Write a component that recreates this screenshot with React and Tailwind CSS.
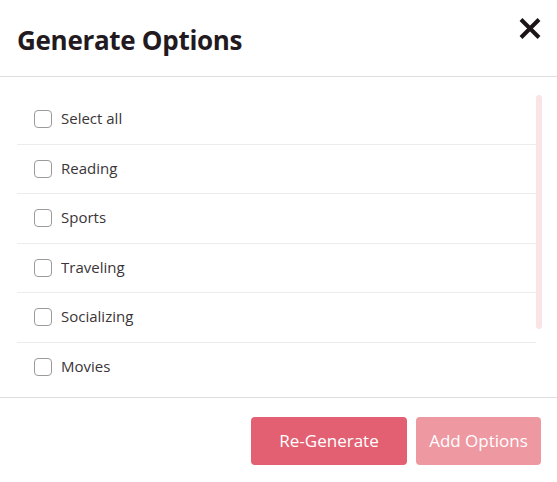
const options = [
  "Select all",
  "Reading",
  "Sports",
  "Traveling",
  "Socializing",
  "Movies",
  "Music",
];

export default function App() {
  return (
    <div
      className="w-[557px] h-[482px] bg-white flex flex-col text-[#231a1f]"
      style={{ fontFamily: '"Open Sans", "Noto Sans", sans-serif' }}
    >
      <div className="h-[77px] shrink-0 flex items-center pl-[17px] border-b border-[#dedde0] relative">
        <h2 className="text-[26px] font-bold tracking-[-0.3px] mt-[4px]">Generate Options</h2>
        <button className="absolute left-[519px] top-[18px]">
          <svg width="22" height="21" viewBox="0 0 22 21" className="block">
            <path d="M2 1.5 L20 19.5 M20 1.5 L2 19.5" stroke="#1c1417" strokeWidth="4" fill="none" />
          </svg>
        </button>
      </div>

      <div className="h-[320px] shrink-0 pt-[18px] pb-[6px] pl-[17px] pr-[15px]">
        <div className="h-full overflow-hidden relative pr-[6px]">
          {options.map((opt) => (
            <label
              key={opt}
              className="h-[49.5px] flex items-center pl-[17px] gap-[9px] text-[15px] text-[#3a3538] cursor-pointer border-b border-[#ececec]"
            >
              <span className="w-[18px] h-[18px] rounded-[4px] border border-[#9d9a9c] bg-white shrink-0" />
              <span className="-mt-[2px]">{opt}</span>
            </label>
          ))}
          <div className="absolute right-0 top-0 w-[6px] h-[234px] rounded-full bg-[#fbe3e6]" />
        </div>
      </div>

      <div className="flex-1 border-t border-[#dedde0] flex items-start justify-end gap-[9px] pt-[19px] pr-[16px]">
        <button className="h-[48px] w-[156px] rounded-[4px] bg-[#e35f72] text-white text-[17px]">
          Re-Generate
        </button>
        <button
          disabled
          className="h-[48px] w-[125px] rounded-[4px] bg-[#ee98a2] text-white text-[17px]"
        >
          Add Options
        </button>
      </div>
    </div>
  );
}
